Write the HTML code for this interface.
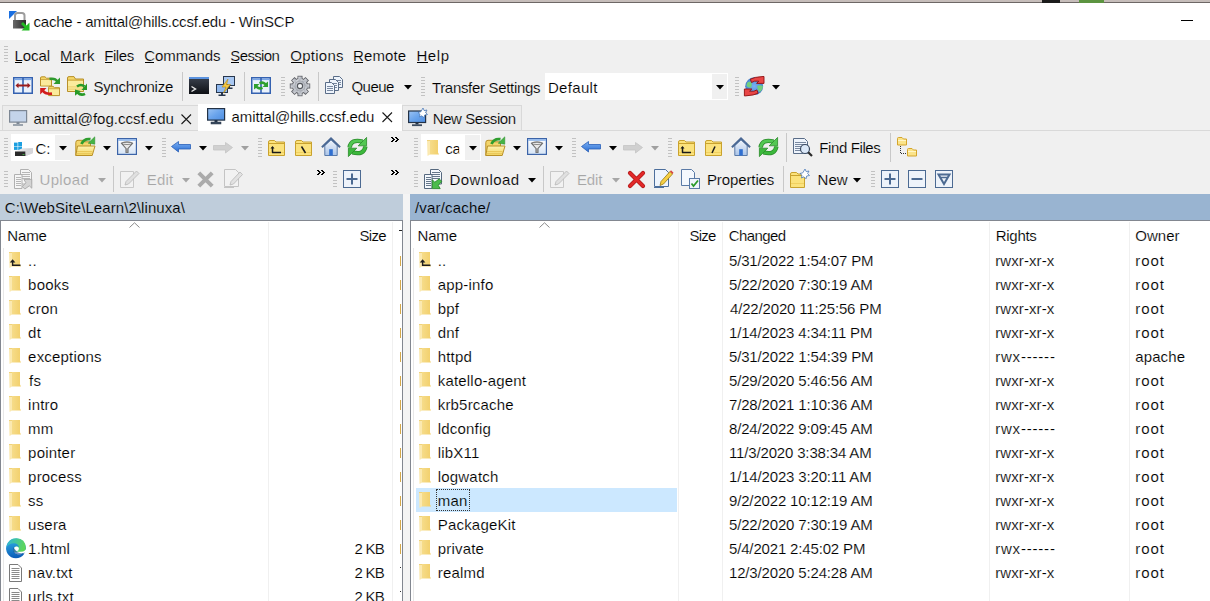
<!DOCTYPE html>
<html><head><meta charset="utf-8">
<style>
*{margin:0;padding:0;box-sizing:border-box}
html,body{width:1210px;height:601px;overflow:hidden;background:#f0f0f0;font-family:"Liberation Sans",sans-serif;color:#000}
.a{position:absolute}
.t{position:absolute;white-space:pre;line-height:20px;font-family:"Liberation Sans",sans-serif}
.grip{position:absolute;width:4px;background:repeating-linear-gradient(#c2c2c2 0 1px,transparent 1px 3px)}
svg{overflow:visible}
</style></head><body>
<div class="a" style="left:0px;top:0px;width:1210px;height:2px;background:#c6bdba;"></div>
<div class="a" style="left:0px;top:2px;width:1210px;height:1px;background:#6d6765;"></div>
<div class="a" style="left:1042px;top:0px;width:18px;height:3px;background:#1c1c1c;"></div>
<div class="a" style="left:1079px;top:0px;width:25px;height:3px;background:#5c9440;"></div>
<div class="a" style="left:0px;top:3px;width:1210px;height:37px;background:#ffffff;"></div>
<div class="a" style="left:1181px;top:20px;width:12px;height:1px;background:#000;"></div>
<div class="grip" style="left:4px;top:46px;height:17px"></div>
<div class="a" style="left:15px;top:62px;width:7px;height:1px;background:#000;"></div>
<div class="a" style="left:61px;top:62px;width:13px;height:1px;background:#000;"></div>
<div class="a" style="left:105px;top:62px;width:7px;height:1px;background:#000;"></div>
<div class="a" style="left:145px;top:62px;width:9px;height:1px;background:#000;"></div>
<div class="a" style="left:231px;top:62px;width:8px;height:1px;background:#000;"></div>
<div class="a" style="left:291px;top:62px;width:11px;height:1px;background:#000;"></div>
<div class="a" style="left:354px;top:62px;width:9px;height:1px;background:#000;"></div>
<div class="a" style="left:417px;top:62px;width:11px;height:1px;background:#000;"></div>
<div class="grip" style="left:4px;top:77px;height:19px"></div>
<div class="a" style="left:182px;top:72px;width:1px;height:29px;background:#c8c8c8;"></div>
<div class="a" style="left:244px;top:72px;width:1px;height:29px;background:#c8c8c8;"></div>
<div class="grip" style="left:281px;top:77px;height:19px"></div>
<div class="a" style="left:318px;top:72px;width:1px;height:29px;background:#c8c8c8;"></div>
<div class="grip" style="left:421px;top:77px;height:19px"></div>
<div class="a" style="left:545px;top:73px;width:183px;height:27px;background:#ffffff;"></div>
<div class="a" style="left:712px;top:74px;width:15px;height:25px;background:#f0f0f0;"></div>
<div class="grip" style="left:735px;top:77px;height:19px"></div>
<div class="a" style="left:0px;top:131px;width:1210px;height:0px;background:#000;"></div>
<div class="a" style="left:2px;top:105px;width:197px;height:26px;background:#ececec;border:1px solid #d9d9d9;border-bottom:none"></div>
<div class="a" style="left:198px;top:104px;width:204px;height:27px;background:#ffffff;"></div>
<div class="a" style="left:402px;top:105px;width:120px;height:26px;background:#ececec;border:1px solid #d9d9d9;border-bottom:none"></div>
<div class="a" style="left:0px;top:130px;width:1210px;height:1px;background:#d9d9d9;"></div>
<div class="a" style="left:198px;top:130px;width:204px;height:1px;background:#ffffff;"></div>
<div class="grip" style="left:4px;top:138px;height:19px"></div>
<div class="a" style="left:11px;top:134px;width:59px;height:27px;background:#ffffff;"></div>
<div class="a" style="left:55px;top:135px;width:15px;height:25px;background:#f0f0f0;"></div>
<div class="grip" style="left:162px;top:138px;height:19px"></div>
<div class="grip" style="left:258px;top:138px;height:19px"></div>
<div class="grip" style="left:4px;top:171px;height:17px"></div>
<div class="a" style="left:113px;top:166px;width:1px;height:26px;background:#c8c8c8;"></div>
<div class="grip" style="left:333px;top:171px;height:17px"></div>
<div class="grip" style="left:414px;top:138px;height:19px"></div>
<div class="a" style="left:421px;top:134px;width:60px;height:27px;background:#ffffff;"></div>
<div class="a" style="left:465px;top:135px;width:15px;height:25px;background:#f0f0f0;"></div>
<div class="grip" style="left:572px;top:138px;height:19px"></div>
<div class="grip" style="left:668px;top:138px;height:19px"></div>
<div class="a" style="left:786px;top:133px;width:1px;height:29px;background:#c8c8c8;"></div>
<div class="a" style="left:890px;top:133px;width:1px;height:29px;background:#c8c8c8;"></div>
<div class="grip" style="left:414px;top:171px;height:17px"></div>
<div class="a" style="left:543px;top:166px;width:1px;height:26px;background:#c8c8c8;"></div>
<div class="a" style="left:783px;top:166px;width:1px;height:26px;background:#c8c8c8;"></div>
<div class="grip" style="left:871px;top:171px;height:17px"></div>
<div class="a" style="left:403px;top:194px;width:7px;height:407px;background:#f4f4f4;"></div>
<div class="a" style="left:0px;top:194px;width:403px;height:26px;background:#bfcddb;"></div>
<div class="a" style="left:410px;top:194px;width:800px;height:26px;background:#99b4d1;"></div>
<div class="a" style="left:0px;top:220px;width:403px;height:381px;background:#ffffff;border:1px solid #828790;border-bottom:none"></div>
<div class="a" style="left:410px;top:220px;width:802px;height:381px;background:#ffffff;border:1px solid #828790;border-bottom:none;border-right:none"></div>
<div class="a" style="left:268px;top:222px;width:1px;height:379px;background:#f0f0f0;"></div>
<div class="a" style="left:392px;top:222px;width:1px;height:379px;background:#f0f0f0;"></div>
<div class="a" style="left:678px;top:222px;width:1px;height:379px;background:#f0f0f0;"></div>
<div class="a" style="left:722px;top:222px;width:1px;height:379px;background:#f0f0f0;"></div>
<div class="a" style="left:989px;top:222px;width:1px;height:379px;background:#f0f0f0;"></div>
<div class="a" style="left:1129px;top:222px;width:1px;height:379px;background:#f0f0f0;"></div>
<div class="a" style="left:3px;top:248px;width:1px;height:353px;background:#e8e8e8;"></div>
<div class="a" style="left:413px;top:248px;width:1px;height:353px;background:#e8e8e8;"></div>
<div class="a" style="left:399px;top:230px;width:3px;height:1px;background:#222;"></div>
<div class="a" style="left:400px;top:256px;width:1px;height:10px;background:#d4a84a;"></div>
<div class="a" style="left:400px;top:280px;width:1px;height:10px;background:#d4a84a;"></div>
<div class="a" style="left:400px;top:304px;width:1px;height:10px;background:#d4a84a;"></div>
<div class="a" style="left:400px;top:328px;width:1px;height:10px;background:#d4a84a;"></div>
<div class="a" style="left:400px;top:352px;width:1px;height:10px;background:#d4a84a;"></div>
<div class="a" style="left:400px;top:376px;width:1px;height:10px;background:#d4a84a;"></div>
<div class="a" style="left:400px;top:400px;width:1px;height:10px;background:#d4a84a;"></div>
<div class="a" style="left:400px;top:424px;width:1px;height:10px;background:#d4a84a;"></div>
<div class="a" style="left:400px;top:448px;width:1px;height:10px;background:#d4a84a;"></div>
<div class="a" style="left:400px;top:472px;width:1px;height:10px;background:#d4a84a;"></div>
<div class="a" style="left:400px;top:496px;width:1px;height:10px;background:#d4a84a;"></div>
<div class="a" style="left:400px;top:520px;width:1px;height:10px;background:#d4a84a;"></div>
<div class="a" style="left:400px;top:544px;width:1px;height:10px;background:#d4a84a;"></div>
<div class="a" style="left:400px;top:567px;width:1px;height:1px;background:#333;"></div>
<div class="a" style="left:400px;top:591px;width:1px;height:1px;background:#333;"></div>
<div class="a" style="left:416px;top:488px;width:261px;height:24px;background:#cce8ff;"></div>
<div class="a" style="left:436px;top:489px;width:34px;height:22px;border:1px dotted #333"></div>
<svg class="a" style="left:9px;top:11px" width="21" height="21" viewBox="0 0 21 21"><defs><linearGradient id="lk" x1="0" x2="1"><stop offset="0" stop-color="#6a6a6a"/><stop offset="1" stop-color="#2a2a2a"/></linearGradient></defs><path d="M0 0H8L0 8Z" fill="#1a6fe0"/><path d="M6 9V4.5Q6 2 8.5 2H13Q15.5 2 15.5 4.5V9" fill="none" stroke="#9c9c9c" stroke-width="2"/><rect x="4" y="9" width="13" height="8.5" fill="url(#lk)"/><path d="M12 13L15.5 16.5L12.5 19.5H20.5V11.5L17.5 14.5L14 11Z" fill="#22bb22"/></svg>
<svg class="a" style="left:13px;top:77px" width="20" height="17" viewBox="0 0 20 17"><rect x="0.75" y="0.75" width="18.5" height="15.5" fill="#e9f1fb" stroke="#3461b0" stroke-width="1.5"/><rect x="1.5" y="1.5" width="17" height="1.6" fill="#7aa6e6"/><rect x="9.2" y="1" width="1.6" height="15" fill="#3461b0"/><path d="M2.5 8.5L5.5 5.8V7.6H14.5V5.8L17.5 8.5L14.5 11.2V9.4H5.5V11.2Z" fill="#9b1c1c"/></svg>
<svg class="a" style="left:40px;top:76px" width="20" height="20" viewBox="0 0 20 20"><path d="M0.5 10V2Q0.5 0.8 1.8 0.8H5L6.5 2.2H11.5V10Z" fill="#f4d668" stroke="#b8902a" stroke-width="1"/><rect x="1" y="3.6" width="10" height="5.8" fill="#fbeb9c"/><rect x="1" y="3" width="10" height="0.8" fill="#c9a23a"/><path d="M8.6 19.6V11.5Q8.6 10.3 9.8 10.3H13L14.5 11.7H19.5V19.6Z" fill="#f4d668" stroke="#b8902a" stroke-width="1"/><rect x="9.1" y="13" width="10" height="6" fill="#fbeb9c"/><rect x="9.1" y="12.4" width="10" height="0.8" fill="#c9a23a"/><path d="M9.5 3Q15 1.8 17.5 5.5" fill="none" stroke="#2e9a2e" stroke-width="2.6"/><path d="M20 1.5V8H13.5Z" fill="#2e9a2e"/><path d="M2.8 14.5Q5.5 18.5 12 17.6" fill="none" stroke="#d21c1c" stroke-width="2.6"/><path d="M0.2 12H6.5L0.2 18.5Z" fill="#d21c1c"/></svg>
<svg class="a" style="left:67px;top:76px" width="20" height="20" viewBox="0 0 20 20"><path d="M0.5 15.5V2Q0.5 0.6 2 0.6H7L8.5 3H16.5V15.5Z" fill="#f4d668" stroke="#b8902a" stroke-width="1"/><rect x="1" y="4.6" width="15" height="10.4" fill="#fbeb9c"/><rect x="1" y="3.6" width="15" height="1" fill="#c9a23a"/><rect x="1" y="10.5" width="15" height="0.8" fill="#e8c860"/><rect x="1" y="12.7" width="15" height="0.8" fill="#e8c860"/><path d="M10 10.5Q14 7.5 17.5 10.5" fill="none" stroke="#279a27" stroke-width="2.6"/><path d="M20 7.5V14H14.5Z" fill="#279a27"/><path d="M10.5 16.5Q14 20 18 17.8" fill="none" stroke="#279a27" stroke-width="2.6"/><path d="M8 13.5V19.8L13.8 15Z" fill="#279a27"/></svg>
<svg class="a" style="left:189px;top:77px" width="20" height="17" viewBox="0 0 20 17"><defs><linearGradient id="tm" x1="0" y1="0" x2="0" y2="1"><stop offset="0" stop-color="#3c4350"/><stop offset="1" stop-color="#0e1014"/></linearGradient></defs><rect x="0" y="0" width="20" height="17" fill="url(#tm)"/><rect x="0" y="0" width="20" height="2" fill="#5b93e0"/><path d="M2.5 9.5L6.5 12L2.5 14.5" fill="none" stroke="#e8e8e8" stroke-width="1.4"/></svg>
<svg class="a" style="left:216px;top:76px" width="20" height="20" viewBox="0 0 20 20"><rect x="7.5" y="0.5" width="11" height="9" fill="#a9c8f2" stroke="#27364d" stroke-width="1"/><rect x="12.0" y="10" width="2" height="2" fill="#27364d"/><rect x="9.5" y="11.5" width="7" height="1.5" fill="#27364d"/><rect x="0.5" y="8.5" width="11" height="8" fill="#8fb8ee" stroke="#27364d" stroke-width="1"/><rect x="5.0" y="17" width="2" height="2" fill="#27364d"/><rect x="2.5" y="18.5" width="7" height="1.5" fill="#27364d"/><path d="M12 3L6 11H10L7.5 17L14.5 8.5H10.5Z" fill="#f5c842" stroke="#b88a10" stroke-width="0.6"/></svg>
<svg class="a" style="left:251px;top:77px" width="20" height="17" viewBox="0 0 20 17"><rect x="0.75" y="0.75" width="18.5" height="15.5" fill="#e9f1fb" stroke="#3461b0" stroke-width="1.5"/><rect x="1.5" y="1.5" width="17" height="1.6" fill="#7aa6e6"/><rect x="9.2" y="1" width="1.6" height="15" fill="#3461b0"/><path d="M8 5Q12 3 15 6L17 4.5V10H11.5L13.5 8Q11.5 6.5 9 7.5Z" fill="#2ea02e"/><path d="M12 12Q8 14 5 11L3 12.5V7H8.5L6.5 9Q8.5 10.5 11 9.5Z" fill="#2ea02e"/></svg>
<svg class="a" style="left:290px;top:76px" width="20" height="20" viewBox="0 0 20 20"><defs><linearGradient id="gr" x1="0" y1="0" x2="1" y2="1"><stop offset="0" stop-color="#e6e8ec"/><stop offset="0.5" stop-color="#b4b8c0"/><stop offset="1" stop-color="#d8dbe0"/></linearGradient></defs><g fill="#5e6066" stroke="#5e6066" stroke-width="1.6"><circle cx="10" cy="10" r="7.2"/><rect x="8.3" y="0.6" width="3.4" height="5" transform="rotate(0 10 10)"/><rect x="8.3" y="0.6" width="3.4" height="5" transform="rotate(45 10 10)"/><rect x="8.3" y="0.6" width="3.4" height="5" transform="rotate(90 10 10)"/><rect x="8.3" y="0.6" width="3.4" height="5" transform="rotate(135 10 10)"/><rect x="8.3" y="0.6" width="3.4" height="5" transform="rotate(180 10 10)"/><rect x="8.3" y="0.6" width="3.4" height="5" transform="rotate(225 10 10)"/><rect x="8.3" y="0.6" width="3.4" height="5" transform="rotate(270 10 10)"/><rect x="8.3" y="0.6" width="3.4" height="5" transform="rotate(315 10 10)"/></g><g fill="url(#gr)"><circle cx="10" cy="10" r="7.2"/><rect x="8.3" y="0.6" width="3.4" height="5" transform="rotate(0 10 10)"/><rect x="8.3" y="0.6" width="3.4" height="5" transform="rotate(45 10 10)"/><rect x="8.3" y="0.6" width="3.4" height="5" transform="rotate(90 10 10)"/><rect x="8.3" y="0.6" width="3.4" height="5" transform="rotate(135 10 10)"/><rect x="8.3" y="0.6" width="3.4" height="5" transform="rotate(180 10 10)"/><rect x="8.3" y="0.6" width="3.4" height="5" transform="rotate(225 10 10)"/><rect x="8.3" y="0.6" width="3.4" height="5" transform="rotate(270 10 10)"/><rect x="8.3" y="0.6" width="3.4" height="5" transform="rotate(315 10 10)"/></g><circle cx="10" cy="10" r="5" fill="none" stroke="#9a9ea6" stroke-width="0.8"/><circle cx="10" cy="10" r="2.6" fill="#f4f6f8" stroke="#55585e" stroke-width="1.1"/></svg>
<svg class="a" style="left:324px;top:76px" width="20" height="19" viewBox="0 0 20 19"><path d="M9.5 0.5H15.5L18.5 3.5V11.5H9.5Z" fill="#eef4fc" stroke="#5a6d88" stroke-width="1"/><rect x="11" y="4" width="6" height="1" fill="#5a6d88" opacity="0.8"/><rect x="11" y="6" width="6" height="1" fill="#5a6d88" opacity="0.8"/><rect x="11" y="8" width="6" height="1" fill="#5a6d88" opacity="0.8"/><path d="M5.5 3.5H11.5L14.5 6.5V14.5H5.5Z" fill="#eef4fc" stroke="#5a6d88" stroke-width="1"/><rect x="7" y="7" width="6" height="1" fill="#5a6d88" opacity="0.8"/><rect x="7" y="9" width="6" height="1" fill="#5a6d88" opacity="0.8"/><rect x="7" y="11" width="6" height="1" fill="#5a6d88" opacity="0.8"/><path d="M1.5 6.5H7.5L10.5 9.5V17.5H1.5Z" fill="#eef4fc" stroke="#5a6d88" stroke-width="1"/><rect x="3" y="10" width="6" height="1" fill="#5a6d88" opacity="0.8"/><rect x="3" y="12" width="6" height="1" fill="#5a6d88" opacity="0.8"/><rect x="3" y="14" width="6" height="1" fill="#5a6d88" opacity="0.8"/></svg>
<svg class="a" style="left:404px;top:85px" width="8" height="5" viewBox="0 0 8 5"><path d="M0 0H8L4 4.5Z" fill="#000"/></svg>
<svg class="a" style="left:716px;top:85px" width="8" height="5" viewBox="0 0 8 5"><path d="M0 0H8L4 4.5Z" fill="#000"/></svg>
<svg class="a" style="left:744px;top:76px" width="21" height="21" viewBox="0 0 21 21"><defs><radialGradient id="gb" cx="0.5" cy="0.5" r="0.55"><stop offset="0" stop-color="#7ab4f4"/><stop offset="0.8" stop-color="#4a8ad8"/><stop offset="1" stop-color="#2a62a8"/></radialGradient></defs><circle cx="10.2" cy="10.2" r="8.9" fill="url(#gb)"/><path d="M3 7Q5 5 7.5 6.5Q8.5 9 7 11.5Q4.5 12 2.5 10Z M13 10Q16 8.5 19 10Q18.5 14.5 15.5 16Q13.5 14 13 10Z" fill="#72d07e"/><path d="M6.3 3.2Q10 1 19 0.5H20V7.4H12.6L14.8 5.2Q10 4.5 7.5 6.5Z" fill="#e84545" stroke="#8e1010" stroke-width="0.9" stroke-linejoin="round"/><path d="M14.1 17.2Q10.4 19.4 1.4 19.9H0.4V13H7.8L5.6 15.2Q10.4 15.9 12.9 13.9Z" fill="#e84545" stroke="#8e1010" stroke-width="0.9" stroke-linejoin="round"/></svg>
<svg class="a" style="left:772px;top:85px" width="8" height="5" viewBox="0 0 8 5"><path d="M0 0H8L4 4.5Z" fill="#000"/></svg>
<svg class="a" style="left:9px;top:110px" width="18" height="17" viewBox="0 0 18 17"><rect x="0.6" y="0.6" width="17" height="11.5" fill="#c4d4ea" stroke="#7d8794" stroke-width="1.2"/><rect x="7.5" y="12" width="3" height="2" fill="#7d8794"/><rect x="4" y="14" width="10" height="2" fill="#9aa3ad"/></svg>
<svg class="a" style="left:181px;top:114px" width="11" height="11" viewBox="0 0 11 11"><path d="M0.5 0.5L10 10M10 0.5L0.5 10" stroke="#1a1a1a" stroke-width="1.1"/></svg>
<svg class="a" style="left:207px;top:108px" width="18" height="17" viewBox="0 0 18 17"><defs><linearGradient id="mg" x1="0" y1="0" x2="1" y2="1"><stop offset="0" stop-color="#9cc4f4"/><stop offset="0.5" stop-color="#6aa4ec"/><stop offset="1" stop-color="#4c8ce0"/></linearGradient></defs><rect x="0.6" y="0.6" width="17" height="11.5" fill="url(#mg)" stroke="#233246" stroke-width="1.2"/><rect x="7.5" y="12" width="3" height="2" fill="#233246"/><rect x="4" y="14" width="10" height="2" fill="#3d4c60" stroke="#233246" stroke-width="0.5"/></svg>
<svg class="a" style="left:382px;top:112px" width="11" height="11" viewBox="0 0 11 11"><path d="M0.5 0.5L10 10M10 0.5L0.5 10" stroke="#1a1a1a" stroke-width="1.1"/></svg>
<svg class="a" style="left:408px;top:108px" width="20" height="19" viewBox="0 0 20 19"><defs><linearGradient id="mg2" x1="0" y1="0" x2="1" y2="1"><stop offset="0" stop-color="#9cc4f4"/><stop offset="0.5" stop-color="#6aa4ec"/><stop offset="1" stop-color="#4c8ce0"/></linearGradient></defs><rect x="0.6" y="3" width="17" height="11.5" fill="url(#mg2)" stroke="#233246" stroke-width="1.2"/><rect x="7.5" y="14.5" width="3" height="2" fill="#233246"/><rect x="4" y="16.3" width="10" height="1.8" fill="#3d4c60"/><path d="M15 0L16.2 2.6L19 2L17.6 4.5L19.5 6.5L16.7 7L16 9.8L14 7.8L11.5 9L12 6.3L10 4.5L12.8 3.8Z" fill="#ffffff" stroke="#4a78b8" stroke-width="0.8"/></svg>
<svg class="a" style="left:14px;top:142px" width="20" height="14" viewBox="0 0 20 14"><rect x="0" y="0.6" width="3.6" height="3.4" fill="#1c9fe0"/><rect x="4.2" y="0" width="3.8" height="4" fill="#1c9fe0"/><rect x="0" y="4.5" width="3.6" height="3.4" fill="#1c9fe0"/><rect x="4.2" y="4.5" width="3.8" height="3.5" fill="#1c9fe0"/><defs><linearGradient id="dv" x1="0" y1="0" x2="1" y2="0"><stop offset="0" stop-color="#f6f6f6"/><stop offset="1" stop-color="#c8c8cc"/></linearGradient></defs><path d="M1 9.5L8.5 6.2H19V11L12 14H1Z" fill="url(#dv)"/><path d="M1 9.5H11.5V14H1Z" fill="#2a2a2a"/><path d="M11.5 9.5L19 6.2V11L12 14Z" fill="#d6d6da"/><rect x="8.5" y="12" width="2" height="1" fill="#3ca03c"/></svg>
<svg class="a" style="left:59px;top:146px" width="8" height="5" viewBox="0 0 8 5"><path d="M0 0H8L4 4.5Z" fill="#000"/></svg>
<svg class="a" style="left:75px;top:136px" width="20" height="20" viewBox="0 0 20 20"><defs><linearGradient id="of" x1="0" y1="0" x2="0" y2="1"><stop offset="0" stop-color="#fff3b0"/><stop offset="1" stop-color="#f2d462"/></linearGradient></defs><path d="M0.8 19.5V6.5Q0.8 4.3 3 4.3H8L9.5 5.8H15.5V10" fill="#f3d56c" stroke="#b99028" stroke-width="1"/><path d="M2.5 10H20L17.2 19.5H0.8Z" fill="url(#of)" stroke="#b99028" stroke-width="1" stroke-linejoin="round"/><rect x="2" y="15" width="15.5" height="0.9" fill="#e8c454"/><rect x="1.6" y="17.2" width="15.5" height="0.9" fill="#e8c454"/><path d="M6.5 8Q9 2.2 15.5 3.2" fill="none" stroke="#2f9e2f" stroke-width="2.8"/><path d="M19.8 0.8V8.2L13.2 7.2Z" fill="#44b444" stroke="#2f8a2f" stroke-width="0.5"/></svg>
<svg class="a" style="left:103px;top:146px" width="8" height="5" viewBox="0 0 8 5"><path d="M0 0H8L4 4.5Z" fill="#000"/></svg>
<svg class="a" style="left:117px;top:138px" width="20" height="17" viewBox="0 0 20 17"><defs><linearGradient id="fg" x1="0" y1="0" x2="0" y2="1"><stop offset="0" stop-color="#ffffff"/><stop offset="1" stop-color="#d6e4f5"/></linearGradient></defs><rect x="0.6" y="0.6" width="18.8" height="15.8" fill="url(#fg)" stroke="#3c64a8" stroke-width="1.2"/><rect x="1.2" y="1.2" width="17.6" height="1.6" fill="#8ab4ec"/><path d="M4.3 5.2Q10 3 15.7 5.2L11 10.5V14.5H9V10.5Z" fill="#e8e8e8" stroke="#6c6c6c" stroke-width="1.1" stroke-linejoin="round"/><ellipse cx="10" cy="5.3" rx="5.2" ry="1.1" fill="#ffffff" stroke="#6c6c6c" stroke-width="0.9"/><rect x="9.2" y="10.5" width="1.6" height="4" fill="#8a8a8a"/></svg>
<svg class="a" style="left:145px;top:146px" width="8" height="5" viewBox="0 0 8 5"><path d="M0 0H8L4 4.5Z" fill="#000"/></svg>
<svg class="a" style="left:171px;top:141px" width="20" height="12" viewBox="0 0 20 12"><defs><linearGradient id="bk" x1="0" y1="0" x2="0" y2="1"><stop offset="0" stop-color="#7db2f5"/><stop offset="1" stop-color="#2a6cd0"/></linearGradient></defs><path d="M0.5 5.5L7.5 0.5V3.5H19.5V8H7.5V11L0.5 5.5Z" fill="url(#bk)" stroke="#2a5fb8" stroke-width="0.8"/></svg>
<svg class="a" style="left:199px;top:146px" width="8" height="5" viewBox="0 0 8 5"><path d="M0 0H8L4 4.5Z" fill="#000"/></svg>
<svg class="a" style="left:213px;top:142px" width="20" height="12" viewBox="0 0 20 12"><path d="M19.5 5.5L12.5 0.5V3.5H0.5V8H12.5V11L19.5 5.5Z" fill="#d0d0d0" stroke="#c4c4c4" stroke-width="0.8"/></svg>
<svg class="a" style="left:241px;top:146px" width="8" height="5" viewBox="0 0 8 5"><path d="M0 0H8L4 4.5Z" fill="#a0a0a0"/></svg>
<svg class="a" style="left:268px;top:140px" width="17" height="16" viewBox="0 0 17 16"><path d="M0.5 2Q0.5 0.5 2 0.5H6.5L8 2H16.5V15.5H0.5Z" fill="#fbe27c" stroke="#c9a22e" stroke-width="1"/><rect x="1" y="3" width="15" height="1" fill="#c9a22e"/><rect x="1" y="12" width="15" height="1" fill="#f0d060"/><path d="M4.5 12.5V7" stroke="#1a1a1a" stroke-width="1.5"/><path d="M2.5 8.5L4.5 6L6.5 8.5Z" fill="#1a1a1a"/><path d="M4 12.5H13" stroke="#1a1a1a" stroke-width="1.5"/></svg>
<svg class="a" style="left:295px;top:140px" width="17" height="16" viewBox="0 0 17 16"><path d="M0.5 2Q0.5 0.5 2 0.5H6.5L8 2H16.5V15.5H0.5Z" fill="#fbe27c" stroke="#c9a22e" stroke-width="1"/><rect x="1" y="3" width="15" height="1" fill="#c9a22e"/><rect x="1" y="12" width="15" height="1" fill="#f0d060"/><path d="M6.5 6.5L10.5 13" stroke="#1a1a1a" stroke-width="1.5"/></svg>
<svg class="a" style="left:321px;top:137px" width="20" height="19" viewBox="0 0 20 19"><defs><linearGradient id="hm" x1="0" y1="0" x2="0" y2="1"><stop offset="0" stop-color="#f2f6fc"/><stop offset="1" stop-color="#aac4e8"/></linearGradient></defs><path d="M3.8 8.5V18.5H16.2V8.5L10 2.8Z" fill="url(#hm)" stroke="#5a7aa8" stroke-width="1"/><path d="M0.9 10.2L10 1.5L19.1 10.2" fill="none" stroke="#4a6894" stroke-width="2"/><rect x="8.2" y="12.2" width="3.6" height="6.3" fill="#2f6fd0"/></svg>
<svg class="a" style="left:348px;top:137px" width="19" height="20" viewBox="0 0 19 20"><defs><linearGradient id="rf" x1="0" y1="0" x2="0" y2="1"><stop offset="0" stop-color="#7ee07e"/><stop offset="1" stop-color="#22a022"/></linearGradient></defs><path d="M1.6 10.5Q3 1.6 14.6 4.6" fill="none" stroke="#2a8a2a" stroke-width="4.4"/><path d="M1.6 10.5Q3 1.6 14.6 4.6" fill="none" stroke="#52c852" stroke-width="2.8"/><path d="M18.6 0.4V8.8H10.2Z" fill="#52c852" stroke="#2a8a2a" stroke-width="0.8" stroke-linejoin="round"/><path d="M17.4 9.5Q16 18.4 4.4 15.4" fill="none" stroke="#2a8a2a" stroke-width="4.4"/><path d="M17.4 9.5Q16 18.4 4.4 15.4" fill="none" stroke="#3cb83c" stroke-width="2.8"/><path d="M0.4 19.6V11.2H8.8Z" fill="#3cb83c" stroke="#2a8a2a" stroke-width="0.8" stroke-linejoin="round"/></svg>
<svg class="a" style="left:391px;top:137px" width="8" height="5" viewBox="0 0 8 5" shape-rendering="crispEdges" fill="#000"><rect x="0" y="0" width="2" height="1"/><rect x="4" y="0" width="2" height="1"/><rect x="1" y="1" width="2" height="1"/><rect x="5" y="1" width="2" height="1"/><rect x="2" y="2" width="2" height="1"/><rect x="6" y="2" width="2" height="1"/><rect x="1" y="3" width="2" height="1"/><rect x="5" y="3" width="2" height="1"/><rect x="0" y="4" width="2" height="1"/><rect x="4" y="4" width="2" height="1"/></svg>
<svg class="a" style="left:14px;top:169px" width="19" height="20" viewBox="0 0 19 20"><path d="M6.5 0.5H14.5L17.5 3.5V15H6.5Z" fill="#f6f6f6" stroke="#b0b0b0" stroke-width="1"/><rect x="8" y="3" width="8" height="0.9" fill="#b0b0b0"/><rect x="8" y="5" width="8" height="0.9" fill="#b0b0b0"/><rect x="8" y="7" width="8" height="0.9" fill="#b0b0b0"/><rect x="8" y="9" width="8" height="0.9" fill="#b0b0b0"/><path d="M0.5 5.5H8V19.5H0.5Z" fill="#f6f6f6" stroke="#b0b0b0" stroke-width="1"/><rect x="2" y="8" width="5" height="0.9" fill="#b0b0b0"/><rect x="2" y="10" width="5" height="0.9" fill="#b0b0b0"/><rect x="2" y="12" width="5" height="0.9" fill="#b0b0b0"/><rect x="2" y="14" width="5" height="0.9" fill="#b0b0b0"/><rect x="2" y="16" width="5" height="0.9" fill="#b0b0b0"/><path d="M17.8 10.4V19.2L15.3 16.8L10.9 20L8.3 17.6L11.9 13.8L9.9 10.4Z" fill="#d4d4d4" stroke="#a8a8a8" stroke-width="0.9" stroke-linejoin="round"/></svg>
<svg class="a" style="left:98px;top:178px" width="8" height="5" viewBox="0 0 8 5"><path d="M0 0H8L4 4.5Z" fill="#a6a6a6"/></svg>
<svg class="a" style="left:120px;top:169px" width="20" height="19" viewBox="0 0 20 19"><path d="M0.5 2.5H13.5V18.5H0.5Z" fill="#f2f2f2" stroke="#c8c8c8" stroke-width="1"/><path d="M5 16L6 12.5L16.5 2L19 4.5L8.5 15Z" fill="#e0e0e0" stroke="#b8b8b8" stroke-width="0.8"/></svg>
<svg class="a" style="left:182px;top:178px" width="8" height="5" viewBox="0 0 8 5"><path d="M0 0H8L4 4.5Z" fill="#a6a6a6"/></svg>
<svg class="a" style="left:197px;top:171px" width="17" height="17" viewBox="0 0 17 17"><path d="M1.8 1.8L15.2 15.2M15.2 1.8L1.8 15.2" stroke="#ababab" stroke-width="4"/></svg>
<svg class="a" style="left:224px;top:169px" width="19" height="19" viewBox="0 0 19 19"><path d="M0.5 0.5H11.5L14.5 3.5V17.5H0.5Z" fill="#f2f2f2" stroke="#c4c4c4" stroke-width="1"/><rect x="0" y="18" width="10" height="1" fill="#c4c4c4"/><path d="M6 16L7 12.5L16 3L18.5 5.5L9.5 15Z" fill="#e2e2e2" stroke="#b8b8b8" stroke-width="0.8"/></svg>
<svg class="a" style="left:317px;top:170px" width="8" height="5" viewBox="0 0 8 5" shape-rendering="crispEdges" fill="#000"><rect x="0" y="0" width="2" height="1"/><rect x="4" y="0" width="2" height="1"/><rect x="1" y="1" width="2" height="1"/><rect x="5" y="1" width="2" height="1"/><rect x="2" y="2" width="2" height="1"/><rect x="6" y="2" width="2" height="1"/><rect x="1" y="3" width="2" height="1"/><rect x="5" y="3" width="2" height="1"/><rect x="0" y="4" width="2" height="1"/><rect x="4" y="4" width="2" height="1"/></svg>
<svg class="a" style="left:343px;top:170px" width="18" height="18" viewBox="0 0 18 18"><rect x="0.5" y="0.5" width="17" height="17" fill="#eef3fa" stroke="#4c6a92" stroke-width="1"/><path d="M9 3.5V14.5M3.5 9H14.5" stroke="#4c6a92" stroke-width="2"/></svg>
<svg class="a" style="left:391px;top:170px" width="8" height="5" viewBox="0 0 8 5" shape-rendering="crispEdges" fill="#000"><rect x="0" y="0" width="2" height="1"/><rect x="4" y="0" width="2" height="1"/><rect x="1" y="1" width="2" height="1"/><rect x="5" y="1" width="2" height="1"/><rect x="2" y="2" width="2" height="1"/><rect x="6" y="2" width="2" height="1"/><rect x="1" y="3" width="2" height="1"/><rect x="5" y="3" width="2" height="1"/><rect x="0" y="4" width="2" height="1"/><rect x="4" y="4" width="2" height="1"/></svg>
<svg class="a" style="left:427px;top:140px" width="12" height="16" viewBox="0 0 12 16"><defs><linearGradient id="lf" x1="0" y1="0" x2="1" y2="0"><stop offset="0" stop-color="#f6dc8a"/><stop offset="1" stop-color="#f2cf6a"/></linearGradient></defs><path d="M0 0H3L3 14.5L0.5 16Z" fill="#fbe9b0"/><path d="M3 0H11V12.5L12 14.5H3Z" fill="url(#lf)"/><path d="M0 0H3V1H0Z" fill="#f0d27a"/></svg>
<svg class="a" style="left:469px;top:146px" width="8" height="5" viewBox="0 0 8 5"><path d="M0 0H8L4 4.5Z" fill="#000"/></svg>
<svg class="a" style="left:485px;top:136px" width="20" height="20" viewBox="0 0 20 20"><defs><linearGradient id="of" x1="0" y1="0" x2="0" y2="1"><stop offset="0" stop-color="#fff3b0"/><stop offset="1" stop-color="#f2d462"/></linearGradient></defs><path d="M0.8 19.5V6.5Q0.8 4.3 3 4.3H8L9.5 5.8H15.5V10" fill="#f3d56c" stroke="#b99028" stroke-width="1"/><path d="M2.5 10H20L17.2 19.5H0.8Z" fill="url(#of)" stroke="#b99028" stroke-width="1" stroke-linejoin="round"/><rect x="2" y="15" width="15.5" height="0.9" fill="#e8c454"/><rect x="1.6" y="17.2" width="15.5" height="0.9" fill="#e8c454"/><path d="M6.5 8Q9 2.2 15.5 3.2" fill="none" stroke="#2f9e2f" stroke-width="2.8"/><path d="M19.8 0.8V8.2L13.2 7.2Z" fill="#44b444" stroke="#2f8a2f" stroke-width="0.5"/></svg>
<svg class="a" style="left:513px;top:146px" width="8" height="5" viewBox="0 0 8 5"><path d="M0 0H8L4 4.5Z" fill="#000"/></svg>
<svg class="a" style="left:527px;top:138px" width="20" height="17" viewBox="0 0 20 17"><defs><linearGradient id="fg" x1="0" y1="0" x2="0" y2="1"><stop offset="0" stop-color="#ffffff"/><stop offset="1" stop-color="#d6e4f5"/></linearGradient></defs><rect x="0.6" y="0.6" width="18.8" height="15.8" fill="url(#fg)" stroke="#3c64a8" stroke-width="1.2"/><rect x="1.2" y="1.2" width="17.6" height="1.6" fill="#8ab4ec"/><path d="M4.3 5.2Q10 3 15.7 5.2L11 10.5V14.5H9V10.5Z" fill="#e8e8e8" stroke="#6c6c6c" stroke-width="1.1" stroke-linejoin="round"/><ellipse cx="10" cy="5.3" rx="5.2" ry="1.1" fill="#ffffff" stroke="#6c6c6c" stroke-width="0.9"/><rect x="9.2" y="10.5" width="1.6" height="4" fill="#8a8a8a"/></svg>
<svg class="a" style="left:555px;top:146px" width="8" height="5" viewBox="0 0 8 5"><path d="M0 0H8L4 4.5Z" fill="#000"/></svg>
<svg class="a" style="left:581px;top:141px" width="20" height="12" viewBox="0 0 20 12"><defs><linearGradient id="bk" x1="0" y1="0" x2="0" y2="1"><stop offset="0" stop-color="#7db2f5"/><stop offset="1" stop-color="#2a6cd0"/></linearGradient></defs><path d="M0.5 5.5L7.5 0.5V3.5H19.5V8H7.5V11L0.5 5.5Z" fill="url(#bk)" stroke="#2a5fb8" stroke-width="0.8"/></svg>
<svg class="a" style="left:609px;top:146px" width="8" height="5" viewBox="0 0 8 5"><path d="M0 0H8L4 4.5Z" fill="#000"/></svg>
<svg class="a" style="left:623px;top:142px" width="20" height="12" viewBox="0 0 20 12"><path d="M19.5 5.5L12.5 0.5V3.5H0.5V8H12.5V11L19.5 5.5Z" fill="#d0d0d0" stroke="#c4c4c4" stroke-width="0.8"/></svg>
<svg class="a" style="left:651px;top:146px" width="8" height="5" viewBox="0 0 8 5"><path d="M0 0H8L4 4.5Z" fill="#a0a0a0"/></svg>
<svg class="a" style="left:678px;top:140px" width="17" height="16" viewBox="0 0 17 16"><path d="M0.5 2Q0.5 0.5 2 0.5H6.5L8 2H16.5V15.5H0.5Z" fill="#fbe27c" stroke="#c9a22e" stroke-width="1"/><rect x="1" y="3" width="15" height="1" fill="#c9a22e"/><rect x="1" y="12" width="15" height="1" fill="#f0d060"/><path d="M4.5 12.5V7" stroke="#1a1a1a" stroke-width="1.5"/><path d="M2.5 8.5L4.5 6L6.5 8.5Z" fill="#1a1a1a"/><path d="M4 12.5H13" stroke="#1a1a1a" stroke-width="1.5"/></svg>
<svg class="a" style="left:705px;top:140px" width="17" height="16" viewBox="0 0 17 16"><path d="M0.5 2Q0.5 0.5 2 0.5H6.5L8 2H16.5V15.5H0.5Z" fill="#fbe27c" stroke="#c9a22e" stroke-width="1"/><rect x="1" y="3" width="15" height="1" fill="#c9a22e"/><rect x="1" y="12" width="15" height="1" fill="#f0d060"/><path d="M10 6.5L7 13" stroke="#1a1a1a" stroke-width="1.5"/></svg>
<svg class="a" style="left:731px;top:137px" width="20" height="19" viewBox="0 0 20 19"><defs><linearGradient id="hm" x1="0" y1="0" x2="0" y2="1"><stop offset="0" stop-color="#f2f6fc"/><stop offset="1" stop-color="#aac4e8"/></linearGradient></defs><path d="M3.8 8.5V18.5H16.2V8.5L10 2.8Z" fill="url(#hm)" stroke="#5a7aa8" stroke-width="1"/><path d="M0.9 10.2L10 1.5L19.1 10.2" fill="none" stroke="#4a6894" stroke-width="2"/><rect x="8.2" y="12.2" width="3.6" height="6.3" fill="#2f6fd0"/></svg>
<svg class="a" style="left:759px;top:137px" width="19" height="20" viewBox="0 0 19 20"><defs><linearGradient id="rf" x1="0" y1="0" x2="0" y2="1"><stop offset="0" stop-color="#7ee07e"/><stop offset="1" stop-color="#22a022"/></linearGradient></defs><path d="M1.6 10.5Q3 1.6 14.6 4.6" fill="none" stroke="#2a8a2a" stroke-width="4.4"/><path d="M1.6 10.5Q3 1.6 14.6 4.6" fill="none" stroke="#52c852" stroke-width="2.8"/><path d="M18.6 0.4V8.8H10.2Z" fill="#52c852" stroke="#2a8a2a" stroke-width="0.8" stroke-linejoin="round"/><path d="M17.4 9.5Q16 18.4 4.4 15.4" fill="none" stroke="#2a8a2a" stroke-width="4.4"/><path d="M17.4 9.5Q16 18.4 4.4 15.4" fill="none" stroke="#3cb83c" stroke-width="2.8"/><path d="M0.4 19.6V11.2H8.8Z" fill="#3cb83c" stroke="#2a8a2a" stroke-width="0.8" stroke-linejoin="round"/></svg>
<svg class="a" style="left:793px;top:138px" width="20" height="19" viewBox="0 0 20 19"><path d="M0.5 0.5H11.5L14.5 3.5V15.5H0.5Z" fill="#eef4fc" stroke="#5a6d88" stroke-width="1"/><rect x="2" y="4" width="11" height="1" fill="#5a6d88" opacity="0.8"/><rect x="2" y="6" width="11" height="1" fill="#5a6d88" opacity="0.8"/><rect x="2" y="8" width="11" height="1" fill="#5a6d88" opacity="0.8"/><rect x="2" y="10" width="11" height="1" fill="#5a6d88" opacity="0.8"/><rect x="2" y="12" width="11" height="1" fill="#5a6d88" opacity="0.8"/><circle cx="12" cy="11" r="4.5" fill="#dbe8f8" stroke="#3a4a60" stroke-width="1.2"/><path d="M15.2 14.2L19 18" stroke="#2a2a2a" stroke-width="2.2"/></svg>
<svg class="a" style="left:897px;top:137px" width="20" height="20" viewBox="0 0 20 20"><path d="M0.5 1.5Q0.5 0.5 1.5 0.5H5L6.5 2H9.5V8.0H0.5Z" fill="#fbe48a" stroke="#d4a52c" stroke-width="1"/><rect x="1" y="3" width="8" height="1" fill="#fff6c8"/><path d="M10.5 12.5Q10.5 11.5 11.5 11.5H15L16.5 13H19.5V19.0H10.5Z" fill="#fbe48a" stroke="#d4a52c" stroke-width="1"/><rect x="11" y="14" width="8" height="1" fill="#fff6c8"/><path d="M3.5 9V16.5H10" fill="none" stroke="#1a1a1a" stroke-width="0.9" stroke-dasharray="1 1"/></svg>
<svg class="a" style="left:424px;top:169px" width="19" height="20" viewBox="0 0 19 20"><path d="M6.5 0.5H14.5L17.5 3.5V15H6.5Z" fill="#f4f8fd" stroke="#56687e" stroke-width="1"/><rect x="8" y="3" width="8" height="0.9" fill="#56687e"/><rect x="8" y="5" width="8" height="0.9" fill="#56687e"/><rect x="8" y="7" width="8" height="0.9" fill="#56687e"/><rect x="8" y="9" width="8" height="0.9" fill="#56687e"/><path d="M0.5 5.5H8V19.5H0.5Z" fill="#f4f8fd" stroke="#56687e" stroke-width="1"/><rect x="2" y="8" width="5" height="0.9" fill="#56687e"/><rect x="2" y="10" width="5" height="0.9" fill="#56687e"/><rect x="2" y="12" width="5" height="0.9" fill="#56687e"/><rect x="2" y="14" width="5" height="0.9" fill="#56687e"/><rect x="2" y="16" width="5" height="0.9" fill="#56687e"/><path d="M8.3 19.6V10.8L10.8 13.2L15.2 10L17.8 12.4L14.2 16.2L16.2 19.6Z" fill="#4cbc4c" stroke="#2a8a2a" stroke-width="0.9" stroke-linejoin="round"/></svg>
<svg class="a" style="left:528px;top:178px" width="8" height="5" viewBox="0 0 8 5"><path d="M0 0H8L4 4.5Z" fill="#000"/></svg>
<svg class="a" style="left:550px;top:169px" width="20" height="19" viewBox="0 0 20 19"><path d="M0.5 2.5H13.5V18.5H0.5Z" fill="#f2f2f2" stroke="#c8c8c8" stroke-width="1"/><path d="M5 16L6 12.5L16.5 2L19 4.5L8.5 15Z" fill="#e0e0e0" stroke="#b8b8b8" stroke-width="0.8"/></svg>
<svg class="a" style="left:612px;top:178px" width="8" height="5" viewBox="0 0 8 5"><path d="M0 0H8L4 4.5Z" fill="#a6a6a6"/></svg>
<svg class="a" style="left:628px;top:171px" width="17" height="17" viewBox="0 0 17 17"><path d="M2 2L15 15M15 2L2 15" stroke="#b01818" stroke-width="4.2" stroke-linecap="round"/><path d="M2 2L15 15M15 2L2 15" stroke="#e22828" stroke-width="2.6" stroke-linecap="round"/></svg>
<svg class="a" style="left:654px;top:169px" width="19" height="19" viewBox="0 0 19 19"><path d="M0.5 0.5H11.5L14.5 3.5V17.5H0.5Z" fill="#eef4fc" stroke="#4c6e9c" stroke-width="1"/><rect x="0" y="18" width="10" height="1" fill="#4c6e9c"/><path d="M6 16.5L7 12.5L16 2.5L18.5 5L9.5 15Z" fill="#f5cf45" stroke="#9a7a10" stroke-width="0.8"/><path d="M16 2.5L17 1.3L19.5 3.8L18.5 5Z" fill="#d84040"/></svg>
<svg class="a" style="left:681px;top:169px" width="19" height="20" viewBox="0 0 19 20"><path d="M0.5 0.5H10.5L13.5 3.5V16.5H0.5Z" fill="#f4f8fd" stroke="#5a7aa6" stroke-width="1"/><rect x="8.5" y="9.5" width="10" height="10" fill="#eef4fc" stroke="#5a7aa6" stroke-width="1"/><path d="M10.5 14.5L12.5 17L17 11.5" fill="none" stroke="#2a9a2a" stroke-width="1.8"/></svg>
<svg class="a" style="left:790px;top:169px" width="20" height="19" viewBox="0 0 20 19"><path d="M0.5 5Q0.5 3.5 2 3.5H6.5L8 5H14.5V18.5H0.5Z" fill="#fbe27c" stroke="#c9a22e" stroke-width="1"/><rect x="1" y="6" width="13" height="1" fill="#c9a22e"/><rect x="1" y="14" width="13" height="1" fill="#f0d060"/><path d="M15 0L16.2 2.6L19 2L17.6 4.5L19.5 6.5L16.7 7L16 9.8L14 7.8L11.5 9L12 6.3L10 4.5L12.8 3.8Z" fill="#ffffff" stroke="#4a78b8" stroke-width="0.8"/></svg>
<svg class="a" style="left:853px;top:178px" width="8" height="5" viewBox="0 0 8 5"><path d="M0 0H8L4 4.5Z" fill="#000"/></svg>
<svg class="a" style="left:881px;top:170px" width="18" height="18" viewBox="0 0 18 18"><rect x="0.5" y="0.5" width="17" height="17" fill="#eef3fa" stroke="#4c6a92" stroke-width="1"/><path d="M9 3.5V14.5M3.5 9H14.5" stroke="#4c6a92" stroke-width="2"/></svg>
<svg class="a" style="left:908px;top:170px" width="18" height="18" viewBox="0 0 18 18"><rect x="0.5" y="0.5" width="17" height="17" fill="#eef3fa" stroke="#4c6a92" stroke-width="1"/><path d="M3.5 9H14.5" stroke="#4c6a92" stroke-width="2"/></svg>
<svg class="a" style="left:935px;top:170px" width="18" height="18" viewBox="0 0 18 18"><rect x="0.5" y="0.5" width="17" height="17" fill="#eef3fa" stroke="#4c6a92" stroke-width="1"/><path d="M3.5 4.5H14.5L9 14Z" fill="none" stroke="#4c6a92" stroke-width="2"/><path d="M5.5 7.5H12.5" stroke="#4c6a92" stroke-width="1.5"/></svg>
<svg class="a" style="left:129px;top:222px" width="11" height="6" viewBox="0 0 11 6"><path d="M0.5 5.5L5.5 0.8L10.5 5.5" fill="none" stroke="#8a8a8a" stroke-width="1"/></svg>
<svg class="a" style="left:539px;top:222px" width="11" height="6" viewBox="0 0 11 6"><path d="M0.5 5.5L5.5 0.8L10.5 5.5" fill="none" stroke="#8a8a8a" stroke-width="1"/></svg>
<svg class="a" style="left:9px;top:252px" width="12" height="16" viewBox="0 0 12 16"><defs><linearGradient id="lf2" x1="0" y1="0" x2="1" y2="0"><stop offset="0" stop-color="#f6dc8a"/><stop offset="1" stop-color="#f2cf6a"/></linearGradient></defs><path d="M0 0H3L3 14.5L0.5 16Z" fill="#fbe9b0"/><path d="M3 0H11V12.5L12 14.5H3Z" fill="url(#lf2)"/><path d="M0 0H3V1H0Z" fill="#f0d27a"/><path d="M3.6 9.5V13.3H11.5" fill="none" stroke="#1e1e1e" stroke-width="1.4"/><path d="M0.8 10.6L3.6 7.3L6.4 10.6Z" fill="#1e1e1e"/></svg>
<svg class="a" style="left:9px;top:276px" width="12" height="16" viewBox="0 0 12 16"><defs><linearGradient id="lf" x1="0" y1="0" x2="1" y2="0"><stop offset="0" stop-color="#f6dc8a"/><stop offset="1" stop-color="#f2cf6a"/></linearGradient></defs><path d="M0 0H3L3 14.5L0.5 16Z" fill="#fbe9b0"/><path d="M3 0H11V12.5L12 14.5H3Z" fill="url(#lf)"/><path d="M0 0H3V1H0Z" fill="#f0d27a"/></svg>
<svg class="a" style="left:9px;top:300px" width="12" height="16" viewBox="0 0 12 16"><defs><linearGradient id="lf" x1="0" y1="0" x2="1" y2="0"><stop offset="0" stop-color="#f6dc8a"/><stop offset="1" stop-color="#f2cf6a"/></linearGradient></defs><path d="M0 0H3L3 14.5L0.5 16Z" fill="#fbe9b0"/><path d="M3 0H11V12.5L12 14.5H3Z" fill="url(#lf)"/><path d="M0 0H3V1H0Z" fill="#f0d27a"/></svg>
<svg class="a" style="left:9px;top:324px" width="12" height="16" viewBox="0 0 12 16"><defs><linearGradient id="lf" x1="0" y1="0" x2="1" y2="0"><stop offset="0" stop-color="#f6dc8a"/><stop offset="1" stop-color="#f2cf6a"/></linearGradient></defs><path d="M0 0H3L3 14.5L0.5 16Z" fill="#fbe9b0"/><path d="M3 0H11V12.5L12 14.5H3Z" fill="url(#lf)"/><path d="M0 0H3V1H0Z" fill="#f0d27a"/></svg>
<svg class="a" style="left:9px;top:348px" width="12" height="16" viewBox="0 0 12 16"><defs><linearGradient id="lf" x1="0" y1="0" x2="1" y2="0"><stop offset="0" stop-color="#f6dc8a"/><stop offset="1" stop-color="#f2cf6a"/></linearGradient></defs><path d="M0 0H3L3 14.5L0.5 16Z" fill="#fbe9b0"/><path d="M3 0H11V12.5L12 14.5H3Z" fill="url(#lf)"/><path d="M0 0H3V1H0Z" fill="#f0d27a"/></svg>
<svg class="a" style="left:9px;top:372px" width="12" height="16" viewBox="0 0 12 16"><defs><linearGradient id="lf" x1="0" y1="0" x2="1" y2="0"><stop offset="0" stop-color="#f6dc8a"/><stop offset="1" stop-color="#f2cf6a"/></linearGradient></defs><path d="M0 0H3L3 14.5L0.5 16Z" fill="#fbe9b0"/><path d="M3 0H11V12.5L12 14.5H3Z" fill="url(#lf)"/><path d="M0 0H3V1H0Z" fill="#f0d27a"/></svg>
<svg class="a" style="left:9px;top:396px" width="12" height="16" viewBox="0 0 12 16"><defs><linearGradient id="lf" x1="0" y1="0" x2="1" y2="0"><stop offset="0" stop-color="#f6dc8a"/><stop offset="1" stop-color="#f2cf6a"/></linearGradient></defs><path d="M0 0H3L3 14.5L0.5 16Z" fill="#fbe9b0"/><path d="M3 0H11V12.5L12 14.5H3Z" fill="url(#lf)"/><path d="M0 0H3V1H0Z" fill="#f0d27a"/></svg>
<svg class="a" style="left:9px;top:420px" width="12" height="16" viewBox="0 0 12 16"><defs><linearGradient id="lf" x1="0" y1="0" x2="1" y2="0"><stop offset="0" stop-color="#f6dc8a"/><stop offset="1" stop-color="#f2cf6a"/></linearGradient></defs><path d="M0 0H3L3 14.5L0.5 16Z" fill="#fbe9b0"/><path d="M3 0H11V12.5L12 14.5H3Z" fill="url(#lf)"/><path d="M0 0H3V1H0Z" fill="#f0d27a"/></svg>
<svg class="a" style="left:9px;top:444px" width="12" height="16" viewBox="0 0 12 16"><defs><linearGradient id="lf" x1="0" y1="0" x2="1" y2="0"><stop offset="0" stop-color="#f6dc8a"/><stop offset="1" stop-color="#f2cf6a"/></linearGradient></defs><path d="M0 0H3L3 14.5L0.5 16Z" fill="#fbe9b0"/><path d="M3 0H11V12.5L12 14.5H3Z" fill="url(#lf)"/><path d="M0 0H3V1H0Z" fill="#f0d27a"/></svg>
<svg class="a" style="left:9px;top:468px" width="12" height="16" viewBox="0 0 12 16"><defs><linearGradient id="lf" x1="0" y1="0" x2="1" y2="0"><stop offset="0" stop-color="#f6dc8a"/><stop offset="1" stop-color="#f2cf6a"/></linearGradient></defs><path d="M0 0H3L3 14.5L0.5 16Z" fill="#fbe9b0"/><path d="M3 0H11V12.5L12 14.5H3Z" fill="url(#lf)"/><path d="M0 0H3V1H0Z" fill="#f0d27a"/></svg>
<svg class="a" style="left:9px;top:492px" width="12" height="16" viewBox="0 0 12 16"><defs><linearGradient id="lf" x1="0" y1="0" x2="1" y2="0"><stop offset="0" stop-color="#f6dc8a"/><stop offset="1" stop-color="#f2cf6a"/></linearGradient></defs><path d="M0 0H3L3 14.5L0.5 16Z" fill="#fbe9b0"/><path d="M3 0H11V12.5L12 14.5H3Z" fill="url(#lf)"/><path d="M0 0H3V1H0Z" fill="#f0d27a"/></svg>
<svg class="a" style="left:9px;top:516px" width="12" height="16" viewBox="0 0 12 16"><defs><linearGradient id="lf" x1="0" y1="0" x2="1" y2="0"><stop offset="0" stop-color="#f6dc8a"/><stop offset="1" stop-color="#f2cf6a"/></linearGradient></defs><path d="M0 0H3L3 14.5L0.5 16Z" fill="#fbe9b0"/><path d="M3 0H11V12.5L12 14.5H3Z" fill="url(#lf)"/><path d="M0 0H3V1H0Z" fill="#f0d27a"/></svg>
<svg class="a" style="left:6px;top:538px" width="20" height="20" viewBox="0 0 20 20"><defs><linearGradient id="eg" x1="0.2" y1="0" x2="0.3" y2="1"><stop offset="0" stop-color="#2fb0e6"/><stop offset="1" stop-color="#0b5cb8"/></linearGradient><linearGradient id="eg2" x1="0" y1="0" x2="1" y2="0.3"><stop offset="0" stop-color="#2cb4e0"/><stop offset="1" stop-color="#5cd65a"/></linearGradient></defs><path d="M19.8 11.5A9.9 9.9 0 1 0 18 16.2L17 15.2Q13 17.8 9.5 15.5Q6.5 13 8.5 9.5" fill="url(#eg)"/><path d="M0.5 9Q2 0.2 10.5 0.2Q19.5 0.5 19.8 10Q19.8 13.8 15 13.8H8.2Q7 12 8.5 9.5Q10.5 7 13 9.5Q12.5 5.5 8 5.3Q3 5.5 0.5 9Z" fill="url(#eg2)"/><circle cx="10.5" cy="10.8" r="2.4" fill="#ffffff"/><path d="M7.2 9.2Q6 14.5 11 16.5Q15 17.5 18 15.8L19.2 14.5Q15 16 11.5 14.2" fill="#0a4a9a" opacity="0.6"/></svg>
<svg class="a" style="left:9px;top:564px" width="13" height="18" viewBox="0 0 13 18"><path d="M0.5 0.5H9L12.5 4V17.5H0.5Z" fill="#fff" stroke="#7a7a7a" stroke-width="1"/><rect x="2.5" y="4" width="8" height="1" fill="#8a8a8a"/><rect x="2.5" y="6" width="8" height="1" fill="#8a8a8a"/><rect x="2.5" y="8" width="8" height="1" fill="#8a8a8a"/><rect x="2.5" y="10" width="8" height="1" fill="#8a8a8a"/><rect x="2.5" y="12" width="8" height="1" fill="#8a8a8a"/><rect x="2.5" y="14" width="8" height="1" fill="#8a8a8a"/></svg>
<svg class="a" style="left:9px;top:588px" width="13" height="18" viewBox="0 0 13 18"><path d="M0.5 0.5H9L12.5 4V17.5H0.5Z" fill="#fff" stroke="#7a7a7a" stroke-width="1"/><rect x="2.5" y="4" width="8" height="1" fill="#8a8a8a"/><rect x="2.5" y="6" width="8" height="1" fill="#8a8a8a"/><rect x="2.5" y="8" width="8" height="1" fill="#8a8a8a"/><rect x="2.5" y="10" width="8" height="1" fill="#8a8a8a"/><rect x="2.5" y="12" width="8" height="1" fill="#8a8a8a"/><rect x="2.5" y="14" width="8" height="1" fill="#8a8a8a"/></svg>
<svg class="a" style="left:419px;top:252px" width="12" height="16" viewBox="0 0 12 16"><defs><linearGradient id="lf2" x1="0" y1="0" x2="1" y2="0"><stop offset="0" stop-color="#f6dc8a"/><stop offset="1" stop-color="#f2cf6a"/></linearGradient></defs><path d="M0 0H3L3 14.5L0.5 16Z" fill="#fbe9b0"/><path d="M3 0H11V12.5L12 14.5H3Z" fill="url(#lf2)"/><path d="M0 0H3V1H0Z" fill="#f0d27a"/><path d="M3.6 9.5V13.3H11.5" fill="none" stroke="#1e1e1e" stroke-width="1.4"/><path d="M0.8 10.6L3.6 7.3L6.4 10.6Z" fill="#1e1e1e"/></svg>
<svg class="a" style="left:419px;top:276px" width="12" height="16" viewBox="0 0 12 16"><defs><linearGradient id="lf" x1="0" y1="0" x2="1" y2="0"><stop offset="0" stop-color="#f6dc8a"/><stop offset="1" stop-color="#f2cf6a"/></linearGradient></defs><path d="M0 0H3L3 14.5L0.5 16Z" fill="#fbe9b0"/><path d="M3 0H11V12.5L12 14.5H3Z" fill="url(#lf)"/><path d="M0 0H3V1H0Z" fill="#f0d27a"/></svg>
<svg class="a" style="left:419px;top:300px" width="12" height="16" viewBox="0 0 12 16"><defs><linearGradient id="lf" x1="0" y1="0" x2="1" y2="0"><stop offset="0" stop-color="#f6dc8a"/><stop offset="1" stop-color="#f2cf6a"/></linearGradient></defs><path d="M0 0H3L3 14.5L0.5 16Z" fill="#fbe9b0"/><path d="M3 0H11V12.5L12 14.5H3Z" fill="url(#lf)"/><path d="M0 0H3V1H0Z" fill="#f0d27a"/></svg>
<svg class="a" style="left:419px;top:324px" width="12" height="16" viewBox="0 0 12 16"><defs><linearGradient id="lf" x1="0" y1="0" x2="1" y2="0"><stop offset="0" stop-color="#f6dc8a"/><stop offset="1" stop-color="#f2cf6a"/></linearGradient></defs><path d="M0 0H3L3 14.5L0.5 16Z" fill="#fbe9b0"/><path d="M3 0H11V12.5L12 14.5H3Z" fill="url(#lf)"/><path d="M0 0H3V1H0Z" fill="#f0d27a"/></svg>
<svg class="a" style="left:419px;top:348px" width="12" height="16" viewBox="0 0 12 16"><defs><linearGradient id="lf" x1="0" y1="0" x2="1" y2="0"><stop offset="0" stop-color="#f6dc8a"/><stop offset="1" stop-color="#f2cf6a"/></linearGradient></defs><path d="M0 0H3L3 14.5L0.5 16Z" fill="#fbe9b0"/><path d="M3 0H11V12.5L12 14.5H3Z" fill="url(#lf)"/><path d="M0 0H3V1H0Z" fill="#f0d27a"/></svg>
<svg class="a" style="left:419px;top:372px" width="12" height="16" viewBox="0 0 12 16"><defs><linearGradient id="lf" x1="0" y1="0" x2="1" y2="0"><stop offset="0" stop-color="#f6dc8a"/><stop offset="1" stop-color="#f2cf6a"/></linearGradient></defs><path d="M0 0H3L3 14.5L0.5 16Z" fill="#fbe9b0"/><path d="M3 0H11V12.5L12 14.5H3Z" fill="url(#lf)"/><path d="M0 0H3V1H0Z" fill="#f0d27a"/></svg>
<svg class="a" style="left:419px;top:396px" width="12" height="16" viewBox="0 0 12 16"><defs><linearGradient id="lf" x1="0" y1="0" x2="1" y2="0"><stop offset="0" stop-color="#f6dc8a"/><stop offset="1" stop-color="#f2cf6a"/></linearGradient></defs><path d="M0 0H3L3 14.5L0.5 16Z" fill="#fbe9b0"/><path d="M3 0H11V12.5L12 14.5H3Z" fill="url(#lf)"/><path d="M0 0H3V1H0Z" fill="#f0d27a"/></svg>
<svg class="a" style="left:419px;top:420px" width="12" height="16" viewBox="0 0 12 16"><defs><linearGradient id="lf" x1="0" y1="0" x2="1" y2="0"><stop offset="0" stop-color="#f6dc8a"/><stop offset="1" stop-color="#f2cf6a"/></linearGradient></defs><path d="M0 0H3L3 14.5L0.5 16Z" fill="#fbe9b0"/><path d="M3 0H11V12.5L12 14.5H3Z" fill="url(#lf)"/><path d="M0 0H3V1H0Z" fill="#f0d27a"/></svg>
<svg class="a" style="left:419px;top:444px" width="12" height="16" viewBox="0 0 12 16"><defs><linearGradient id="lf" x1="0" y1="0" x2="1" y2="0"><stop offset="0" stop-color="#f6dc8a"/><stop offset="1" stop-color="#f2cf6a"/></linearGradient></defs><path d="M0 0H3L3 14.5L0.5 16Z" fill="#fbe9b0"/><path d="M3 0H11V12.5L12 14.5H3Z" fill="url(#lf)"/><path d="M0 0H3V1H0Z" fill="#f0d27a"/></svg>
<svg class="a" style="left:419px;top:468px" width="12" height="16" viewBox="0 0 12 16"><defs><linearGradient id="lf" x1="0" y1="0" x2="1" y2="0"><stop offset="0" stop-color="#f6dc8a"/><stop offset="1" stop-color="#f2cf6a"/></linearGradient></defs><path d="M0 0H3L3 14.5L0.5 16Z" fill="#fbe9b0"/><path d="M3 0H11V12.5L12 14.5H3Z" fill="url(#lf)"/><path d="M0 0H3V1H0Z" fill="#f0d27a"/></svg>
<svg class="a" style="left:419px;top:492px" width="12" height="16" viewBox="0 0 12 16"><defs><linearGradient id="lf" x1="0" y1="0" x2="1" y2="0"><stop offset="0" stop-color="#f6dc8a"/><stop offset="1" stop-color="#f2cf6a"/></linearGradient></defs><path d="M0 0H3L3 14.5L0.5 16Z" fill="#fbe9b0"/><path d="M3 0H11V12.5L12 14.5H3Z" fill="url(#lf)"/><path d="M0 0H3V1H0Z" fill="#f0d27a"/></svg>
<svg class="a" style="left:419px;top:516px" width="12" height="16" viewBox="0 0 12 16"><defs><linearGradient id="lf" x1="0" y1="0" x2="1" y2="0"><stop offset="0" stop-color="#f6dc8a"/><stop offset="1" stop-color="#f2cf6a"/></linearGradient></defs><path d="M0 0H3L3 14.5L0.5 16Z" fill="#fbe9b0"/><path d="M3 0H11V12.5L12 14.5H3Z" fill="url(#lf)"/><path d="M0 0H3V1H0Z" fill="#f0d27a"/></svg>
<svg class="a" style="left:419px;top:540px" width="12" height="16" viewBox="0 0 12 16"><defs><linearGradient id="lf" x1="0" y1="0" x2="1" y2="0"><stop offset="0" stop-color="#f6dc8a"/><stop offset="1" stop-color="#f2cf6a"/></linearGradient></defs><path d="M0 0H3L3 14.5L0.5 16Z" fill="#fbe9b0"/><path d="M3 0H11V12.5L12 14.5H3Z" fill="url(#lf)"/><path d="M0 0H3V1H0Z" fill="#f0d27a"/></svg>
<svg class="a" style="left:419px;top:564px" width="12" height="16" viewBox="0 0 12 16"><defs><linearGradient id="lf" x1="0" y1="0" x2="1" y2="0"><stop offset="0" stop-color="#f6dc8a"/><stop offset="1" stop-color="#f2cf6a"/></linearGradient></defs><path d="M0 0H3L3 14.5L0.5 16Z" fill="#fbe9b0"/><path d="M3 0H11V12.5L12 14.5H3Z" fill="url(#lf)"/><path d="M0 0H3V1H0Z" fill="#f0d27a"/></svg>
<div class="t" style="left:33.50px;top:12px;font-size:15px;letter-spacing:-0.203px;color:#000;-webkit-text-stroke:0.15px #ffffff;">cache - amittal@hills.ccsf.edu - WinSCP</div>
<div class="t" style="left:14.50px;top:46px;font-size:15px;letter-spacing:-0.075px;color:#000;-webkit-text-stroke:0.15px #f0f0f0;">Local</div>
<div class="t" style="left:60.00px;top:46px;font-size:15px;letter-spacing:0.400px;color:#000;-webkit-text-stroke:0.15px #f0f0f0;">Mark</div>
<div class="t" style="left:104.20px;top:46px;font-size:15px;letter-spacing:-0.425px;color:#000;-webkit-text-stroke:0.15px #f0f0f0;">Files</div>
<div class="t" style="left:144.20px;top:46px;font-size:15px;letter-spacing:-0.057px;color:#000;-webkit-text-stroke:0.15px #f0f0f0;">Commands</div>
<div class="t" style="left:230.30px;top:46px;font-size:15px;letter-spacing:-0.633px;color:#000;-webkit-text-stroke:0.15px #ffffff;">Session</div>
<div class="t" style="left:290.30px;top:46px;font-size:15px;letter-spacing:0.250px;color:#000;-webkit-text-stroke:0.15px #ffffff;">Options</div>
<div class="t" style="left:353.10px;top:46px;font-size:15px;letter-spacing:0.100px;color:#000;-webkit-text-stroke:0.15px #ffffff;">Remote</div>
<div class="t" style="left:416.40px;top:46px;font-size:15px;letter-spacing:0.633px;color:#000;-webkit-text-stroke:0.15px #f0f0f0;">Help</div>
<div class="t" style="left:93.40px;top:77px;font-size:15px;letter-spacing:-0.270px;color:#000;-webkit-text-stroke:0.15px #f0f0f0;">Synchronize</div>
<div class="t" style="left:351.50px;top:77px;font-size:15px;letter-spacing:-0.550px;color:#000;-webkit-text-stroke:0.15px #ffffff;">Queue</div>
<div class="t" style="left:431.90px;top:78px;font-size:15px;letter-spacing:-0.319px;color:#000;-webkit-text-stroke:0.15px #f0f0f0;">Transfer Settings</div>
<div class="t" style="left:547.90px;top:78px;font-size:15px;letter-spacing:0.333px;color:#000;-webkit-text-stroke:0.15px #ffffff;">Default</div>
<div class="t" style="left:33.40px;top:109px;font-size:15px;letter-spacing:0.011px;color:#000;-webkit-text-stroke:0.15px #ececec;">amittal@fog.ccsf.edu</div>
<div class="t" style="left:231.60px;top:107px;font-size:15px;letter-spacing:-0.124px;color:#000;-webkit-text-stroke:0.15px #ffffff;">amittal@hills.ccsf.edu</div>
<div class="t" style="left:432.80px;top:109px;font-size:15px;letter-spacing:-0.430px;color:#000;-webkit-text-stroke:0.15px #ececec;">New Session</div>
<div class="t" style="left:35.40px;top:139px;font-size:15px;letter-spacing:0.000px;color:#000;-webkit-text-stroke:0.15px #ffffff;">C:</div>
<div class="t" style="left:39.50px;top:170px;font-size:15px;letter-spacing:0.340px;color:#a6a6a6;-webkit-text-stroke:0.15px #f0f0f0;">Upload</div>
<div class="t" style="left:146.80px;top:170px;font-size:15px;letter-spacing:0.133px;color:#a6a6a6;-webkit-text-stroke:0.15px #f0f0f0;">Edit</div>
<div class="t" style="left:445.20px;top:139px;font-size:15px;letter-spacing:-0.300px;color:#000;-webkit-text-stroke:0.15px #ffffff;clip-path:inset(0 calc(100% - 14px) 0 0);">cache</div>
<div class="t" style="left:819.30px;top:138px;font-size:15px;letter-spacing:-0.389px;color:#000;-webkit-text-stroke:0.15px #f0f0f0;">Find Files</div>
<div class="t" style="left:449.50px;top:170px;font-size:15px;letter-spacing:0.400px;color:#000;-webkit-text-stroke:0.15px #f0f0f0;">Download</div>
<div class="t" style="left:577.00px;top:170px;font-size:15px;letter-spacing:-0.133px;color:#a6a6a6;-webkit-text-stroke:0.15px #f0f0f0;">Edit</div>
<div class="t" style="left:706.90px;top:170px;font-size:15px;letter-spacing:-0.100px;color:#000;-webkit-text-stroke:0.15px #f0f0f0;">Properties</div>
<div class="t" style="left:817.60px;top:170px;font-size:15px;letter-spacing:0.050px;color:#000;-webkit-text-stroke:0.15px #f0f0f0;">New</div>
<div class="t" style="left:4.80px;top:198px;font-size:15px;letter-spacing:0.080px;color:#000;-webkit-text-stroke:0.15px #bfcddb;">C:\WebSite\Learn\2\linuxa\</div>
<div class="t" style="left:414.90px;top:198px;font-size:15px;letter-spacing:0.200px;color:#000;-webkit-text-stroke:0.15px #99b4d1;">/var/cache/</div>
<div class="t" style="left:7.30px;top:226px;font-size:15px;letter-spacing:-0.167px;color:#000;-webkit-text-stroke:0.15px #ffffff;">Name</div>
<div class="t" style="left:359.60px;top:226px;font-size:15px;letter-spacing:-0.733px;color:#000;-webkit-text-stroke:0.15px #ffffff;">Size</div>
<div class="t" style="left:417.50px;top:226px;font-size:15px;letter-spacing:-0.167px;color:#000;-webkit-text-stroke:0.15px #ffffff;">Name</div>
<div class="t" style="left:689.40px;top:226px;font-size:15px;letter-spacing:-0.733px;color:#000;-webkit-text-stroke:0.15px #ffffff;">Size</div>
<div class="t" style="left:728.70px;top:226px;font-size:15px;letter-spacing:-0.567px;color:#000;-webkit-text-stroke:0.15px #ffffff;">Changed</div>
<div class="t" style="left:995.80px;top:226px;font-size:15px;letter-spacing:-0.300px;color:#000;-webkit-text-stroke:0.15px #ffffff;">Rights</div>
<div class="t" style="left:1135.30px;top:226px;font-size:15px;letter-spacing:0.000px;color:#000;-webkit-text-stroke:0.15px #ffffff;">Owner</div>
<div class="t" style="left:28.10px;top:251px;font-size:15px;letter-spacing:0.200px;color:#000;-webkit-text-stroke:0.15px #ffffff;">..</div>
<div class="t" style="left:28.10px;top:275px;font-size:15px;letter-spacing:0.200px;color:#000;-webkit-text-stroke:0.15px #ffffff;">books</div>
<div class="t" style="left:28.10px;top:299px;font-size:15px;letter-spacing:0.200px;color:#000;-webkit-text-stroke:0.15px #ffffff;">cron</div>
<div class="t" style="left:28.10px;top:323px;font-size:15px;letter-spacing:0.200px;color:#000;-webkit-text-stroke:0.15px #ffffff;">dt</div>
<div class="t" style="left:28.10px;top:347px;font-size:15px;letter-spacing:0.200px;color:#000;-webkit-text-stroke:0.15px #ffffff;">exceptions</div>
<div class="t" style="left:29.10px;top:371px;font-size:15px;letter-spacing:0.200px;color:#000;-webkit-text-stroke:0.15px #ffffff;">fs</div>
<div class="t" style="left:28.10px;top:395px;font-size:15px;letter-spacing:0.200px;color:#000;-webkit-text-stroke:0.15px #ffffff;">intro</div>
<div class="t" style="left:28.10px;top:419px;font-size:15px;letter-spacing:0.200px;color:#000;-webkit-text-stroke:0.15px #ffffff;">mm</div>
<div class="t" style="left:28.10px;top:443px;font-size:15px;letter-spacing:0.200px;color:#000;-webkit-text-stroke:0.15px #ffffff;">pointer</div>
<div class="t" style="left:28.10px;top:467px;font-size:15px;letter-spacing:0.200px;color:#000;-webkit-text-stroke:0.15px #ffffff;">process</div>
<div class="t" style="left:28.10px;top:491px;font-size:15px;letter-spacing:0.200px;color:#000;-webkit-text-stroke:0.15px #ffffff;">ss</div>
<div class="t" style="left:28.10px;top:515px;font-size:15px;letter-spacing:0.200px;color:#000;-webkit-text-stroke:0.15px #ffffff;">usera</div>
<div class="t" style="left:28.10px;top:539px;font-size:15px;letter-spacing:0.200px;color:#000;-webkit-text-stroke:0.15px #ffffff;">1.html</div>
<div class="t" style="left:354.50px;top:539px;font-size:15px;letter-spacing:-0.767px;color:#000;-webkit-text-stroke:0.15px #ffffff;">2 KB</div>
<div class="t" style="left:28.10px;top:563px;font-size:15px;letter-spacing:0.200px;color:#000;-webkit-text-stroke:0.15px #ffffff;">nav.txt</div>
<div class="t" style="left:354.50px;top:563px;font-size:15px;letter-spacing:-0.767px;color:#000;-webkit-text-stroke:0.15px #ffffff;">2 KB</div>
<div class="t" style="left:28.10px;top:587px;font-size:15px;letter-spacing:0.200px;color:#000;-webkit-text-stroke:0.15px #ffffff;">urls.txt</div>
<div class="t" style="left:354.50px;top:587px;font-size:15px;letter-spacing:-0.767px;color:#000;-webkit-text-stroke:0.15px #ffffff;">2 KB</div>
<div class="t" style="left:437.70px;top:251px;font-size:15px;letter-spacing:0.200px;color:#000;-webkit-text-stroke:0.15px #ffffff;">..</div>
<div class="t" style="left:729.00px;top:251px;font-size:15px;letter-spacing:-0.160px;color:#000;-webkit-text-stroke:0.15px #ffffff;">5/31/2022 1:54:07 PM</div>
<div class="t" style="left:995.20px;top:251px;font-size:15px;letter-spacing:0.100px;color:#000;-webkit-text-stroke:0.15px #ffffff;">rwxr-xr-x</div>
<div class="t" style="left:1135.30px;top:251px;font-size:15px;letter-spacing:0.900px;color:#000;-webkit-text-stroke:0.15px #ffffff;">root</div>
<div class="t" style="left:437.70px;top:275px;font-size:15px;letter-spacing:0.200px;color:#000;-webkit-text-stroke:0.15px #ffffff;">app-info</div>
<div class="t" style="left:729.00px;top:275px;font-size:15px;letter-spacing:-0.160px;color:#000;-webkit-text-stroke:0.15px #ffffff;">5/22/2020 7:30:19 AM</div>
<div class="t" style="left:995.20px;top:275px;font-size:15px;letter-spacing:0.100px;color:#000;-webkit-text-stroke:0.15px #ffffff;">rwxr-xr-x</div>
<div class="t" style="left:1135.30px;top:275px;font-size:15px;letter-spacing:0.900px;color:#000;-webkit-text-stroke:0.15px #ffffff;">root</div>
<div class="t" style="left:437.70px;top:299px;font-size:15px;letter-spacing:0.200px;color:#000;-webkit-text-stroke:0.15px #ffffff;">bpf</div>
<div class="t" style="left:730.00px;top:299px;font-size:15px;letter-spacing:-0.160px;color:#000;-webkit-text-stroke:0.15px #ffffff;">4/22/2020 11:25:56 PM</div>
<div class="t" style="left:995.20px;top:299px;font-size:15px;letter-spacing:0.100px;color:#000;-webkit-text-stroke:0.15px #ffffff;">rwxr-xr-x</div>
<div class="t" style="left:1135.30px;top:299px;font-size:15px;letter-spacing:0.900px;color:#000;-webkit-text-stroke:0.15px #ffffff;">root</div>
<div class="t" style="left:437.70px;top:323px;font-size:15px;letter-spacing:0.200px;color:#000;-webkit-text-stroke:0.15px #ffffff;">dnf</div>
<div class="t" style="left:729.00px;top:323px;font-size:15px;letter-spacing:-0.160px;color:#000;-webkit-text-stroke:0.15px #ffffff;">1/14/2023 4:34:11 PM</div>
<div class="t" style="left:995.20px;top:323px;font-size:15px;letter-spacing:0.100px;color:#000;-webkit-text-stroke:0.15px #ffffff;">rwxr-xr-x</div>
<div class="t" style="left:1135.30px;top:323px;font-size:15px;letter-spacing:0.900px;color:#000;-webkit-text-stroke:0.15px #ffffff;">root</div>
<div class="t" style="left:437.70px;top:347px;font-size:15px;letter-spacing:0.200px;color:#000;-webkit-text-stroke:0.15px #ffffff;">httpd</div>
<div class="t" style="left:729.00px;top:347px;font-size:15px;letter-spacing:-0.160px;color:#000;-webkit-text-stroke:0.15px #ffffff;">5/31/2022 1:54:39 PM</div>
<div class="t" style="left:995.20px;top:347px;font-size:15px;letter-spacing:0.800px;color:#000;-webkit-text-stroke:0.15px #ffffff;">rwx------</div>
<div class="t" style="left:1135.30px;top:347px;font-size:15px;letter-spacing:0.100px;color:#000;-webkit-text-stroke:0.15px #ffffff;">apache</div>
<div class="t" style="left:437.70px;top:371px;font-size:15px;letter-spacing:0.200px;color:#000;-webkit-text-stroke:0.15px #ffffff;">katello-agent</div>
<div class="t" style="left:729.00px;top:371px;font-size:15px;letter-spacing:-0.160px;color:#000;-webkit-text-stroke:0.15px #ffffff;">5/29/2020 5:46:56 AM</div>
<div class="t" style="left:995.20px;top:371px;font-size:15px;letter-spacing:0.100px;color:#000;-webkit-text-stroke:0.15px #ffffff;">rwxr-xr-x</div>
<div class="t" style="left:1135.30px;top:371px;font-size:15px;letter-spacing:0.900px;color:#000;-webkit-text-stroke:0.15px #ffffff;">root</div>
<div class="t" style="left:437.70px;top:395px;font-size:15px;letter-spacing:0.200px;color:#000;-webkit-text-stroke:0.15px #ffffff;">krb5rcache</div>
<div class="t" style="left:729.00px;top:395px;font-size:15px;letter-spacing:-0.160px;color:#000;-webkit-text-stroke:0.15px #ffffff;">7/28/2021 1:10:36 AM</div>
<div class="t" style="left:995.20px;top:395px;font-size:15px;letter-spacing:0.100px;color:#000;-webkit-text-stroke:0.15px #ffffff;">rwxr-xr-x</div>
<div class="t" style="left:1135.30px;top:395px;font-size:15px;letter-spacing:0.900px;color:#000;-webkit-text-stroke:0.15px #ffffff;">root</div>
<div class="t" style="left:437.70px;top:419px;font-size:15px;letter-spacing:0.200px;color:#000;-webkit-text-stroke:0.15px #ffffff;">ldconfig</div>
<div class="t" style="left:729.00px;top:419px;font-size:15px;letter-spacing:-0.160px;color:#000;-webkit-text-stroke:0.15px #ffffff;">8/24/2022 9:09:45 AM</div>
<div class="t" style="left:995.20px;top:419px;font-size:15px;letter-spacing:0.800px;color:#000;-webkit-text-stroke:0.15px #ffffff;">rwx------</div>
<div class="t" style="left:1135.30px;top:419px;font-size:15px;letter-spacing:0.900px;color:#000;-webkit-text-stroke:0.15px #ffffff;">root</div>
<div class="t" style="left:437.70px;top:443px;font-size:15px;letter-spacing:0.200px;color:#000;-webkit-text-stroke:0.15px #ffffff;">libX11</div>
<div class="t" style="left:729.00px;top:443px;font-size:15px;letter-spacing:-0.160px;color:#000;-webkit-text-stroke:0.15px #ffffff;">11/3/2020 3:38:34 AM</div>
<div class="t" style="left:995.20px;top:443px;font-size:15px;letter-spacing:0.100px;color:#000;-webkit-text-stroke:0.15px #ffffff;">rwxr-xr-x</div>
<div class="t" style="left:1135.30px;top:443px;font-size:15px;letter-spacing:0.900px;color:#000;-webkit-text-stroke:0.15px #ffffff;">root</div>
<div class="t" style="left:437.70px;top:467px;font-size:15px;letter-spacing:0.200px;color:#000;-webkit-text-stroke:0.15px #ffffff;">logwatch</div>
<div class="t" style="left:729.00px;top:467px;font-size:15px;letter-spacing:-0.160px;color:#000;-webkit-text-stroke:0.15px #ffffff;">1/14/2023 3:20:11 AM</div>
<div class="t" style="left:995.20px;top:467px;font-size:15px;letter-spacing:0.100px;color:#000;-webkit-text-stroke:0.15px #ffffff;">rwxr-xr-x</div>
<div class="t" style="left:1135.30px;top:467px;font-size:15px;letter-spacing:0.900px;color:#000;-webkit-text-stroke:0.15px #ffffff;">root</div>
<div class="t" style="left:437.70px;top:491px;font-size:15px;letter-spacing:0.200px;color:#000;-webkit-text-stroke:0.15px #cce8ff;">man</div>
<div class="t" style="left:729.00px;top:491px;font-size:15px;letter-spacing:-0.160px;color:#000;-webkit-text-stroke:0.15px #ffffff;">9/2/2022 10:12:19 AM</div>
<div class="t" style="left:995.20px;top:491px;font-size:15px;letter-spacing:0.100px;color:#000;-webkit-text-stroke:0.15px #ffffff;">rwxr-xr-x</div>
<div class="t" style="left:1135.30px;top:491px;font-size:15px;letter-spacing:0.900px;color:#000;-webkit-text-stroke:0.15px #ffffff;">root</div>
<div class="t" style="left:437.70px;top:515px;font-size:15px;letter-spacing:0.200px;color:#000;-webkit-text-stroke:0.15px #ffffff;">PackageKit</div>
<div class="t" style="left:729.00px;top:515px;font-size:15px;letter-spacing:-0.160px;color:#000;-webkit-text-stroke:0.15px #ffffff;">5/22/2020 7:30:19 AM</div>
<div class="t" style="left:995.20px;top:515px;font-size:15px;letter-spacing:0.100px;color:#000;-webkit-text-stroke:0.15px #ffffff;">rwxr-xr-x</div>
<div class="t" style="left:1135.30px;top:515px;font-size:15px;letter-spacing:0.900px;color:#000;-webkit-text-stroke:0.15px #ffffff;">root</div>
<div class="t" style="left:437.70px;top:539px;font-size:15px;letter-spacing:0.200px;color:#000;-webkit-text-stroke:0.15px #ffffff;">private</div>
<div class="t" style="left:729.00px;top:539px;font-size:15px;letter-spacing:-0.160px;color:#000;-webkit-text-stroke:0.15px #ffffff;">5/4/2021 2:45:02 PM</div>
<div class="t" style="left:995.20px;top:539px;font-size:15px;letter-spacing:0.800px;color:#000;-webkit-text-stroke:0.15px #ffffff;">rwx------</div>
<div class="t" style="left:1135.30px;top:539px;font-size:15px;letter-spacing:0.900px;color:#000;-webkit-text-stroke:0.15px #ffffff;">root</div>
<div class="t" style="left:437.70px;top:563px;font-size:15px;letter-spacing:0.200px;color:#000;-webkit-text-stroke:0.15px #ffffff;">realmd</div>
<div class="t" style="left:729.00px;top:563px;font-size:15px;letter-spacing:-0.160px;color:#000;-webkit-text-stroke:0.15px #ffffff;">12/3/2020 5:24:28 AM</div>
<div class="t" style="left:995.20px;top:563px;font-size:15px;letter-spacing:0.100px;color:#000;-webkit-text-stroke:0.15px #ffffff;">rwxr-xr-x</div>
<div class="t" style="left:1135.30px;top:563px;font-size:15px;letter-spacing:0.900px;color:#000;-webkit-text-stroke:0.15px #ffffff;">root</div>
</body></html>
